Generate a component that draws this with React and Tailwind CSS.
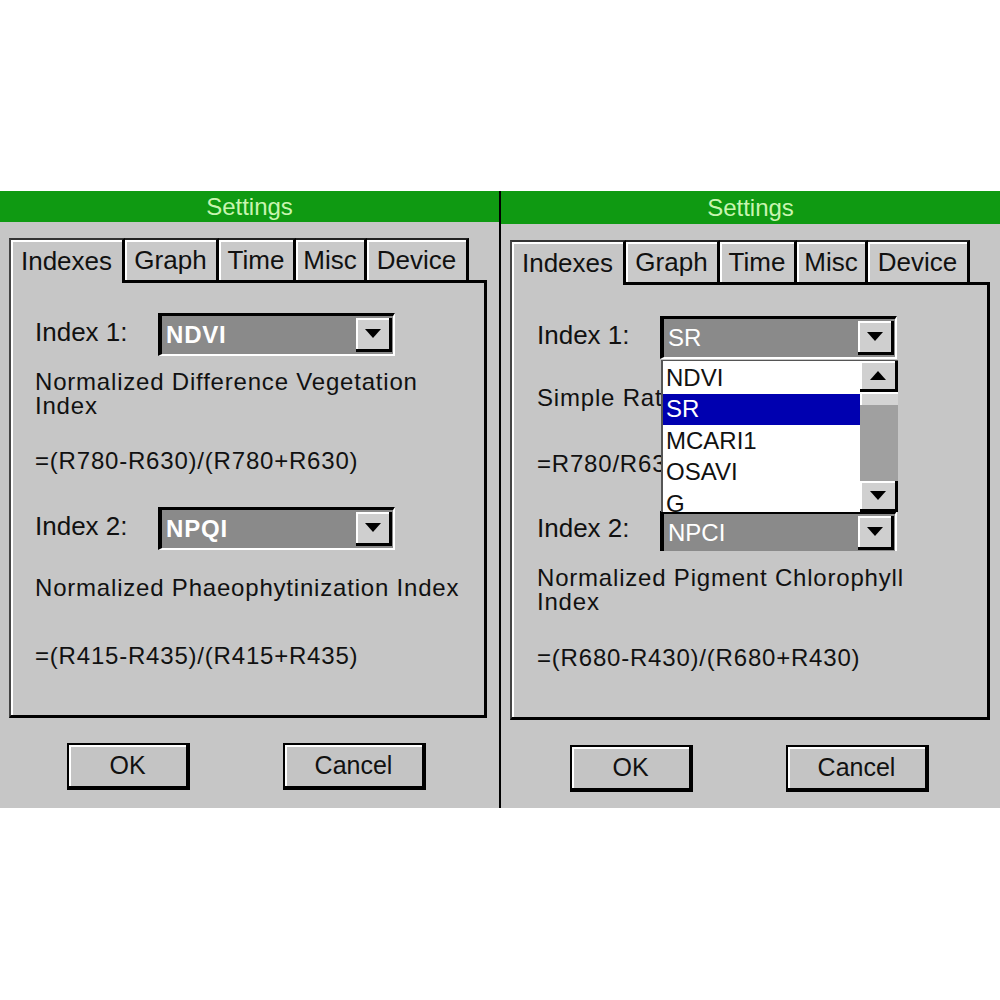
const FONT = { fontFamily: '"Liberation Sans", Arial, sans-serif' };

function Arrow({ up }) {
  return (
    <svg width="16" height="9" viewBox="0 0 16 9">
      {up ? <polygon points="0,9 16,9 8,0" fill="#000" /> : <polygon points="0,0 16,0 8,9" fill="#000" />}
    </svg>
  );
}

function Combo({ value, bold }) {
  return (
    <div className="flex h-[43px] w-[237px] border-t-[3px] border-l-[4px] border-t-black border-l-black border-b-2 border-r-2 border-b-white border-r-white bg-[#8a8a8a]">
      <div className={`flex flex-1 items-center pl-[4px] text-[24px] text-white ${bold ? "font-bold" : ""}`}>{value}</div>
      <div className="my-[2px] mr-[1px] flex w-[36px] items-center justify-center border-r-[3px] border-b-[3px] border-black bg-[#cfcfcf] shadow-[inset_2px_2px_0_#fff]">
        <Arrow />
      </div>
    </div>
  );
}

function DropList() {
  const items = ["NDVI", "SR", "MCARI1", "OSAVI", "G"];
  return (
    <div className="absolute left-[1px] top-[44px] z-10 flex h-[152px] w-[237px] border-t border-l-2 border-[#555] bg-white">
      {/* items */}
      <div className="flex-1 overflow-hidden pt-[1px]">
        {items.map((it) => (
          <div
            key={it}
            className={`flex h-[31.5px] items-center pl-[3px] text-[24px] ${it === "SR" ? "bg-[#0000b0] text-white" : "text-[#111]"}`}
          >
            {it}
          </div>
        ))}
      </div>
      {/* scrollbar */}
      <div className="flex w-[38px] flex-col bg-[#a0a0a0]">
        <div className="flex h-[31px] items-center justify-center border-r-[3px] border-b-[3px] border-black bg-[#d0d0d0] shadow-[inset_2px_2px_0_#fff]">
          <Arrow up />
        </div>
        <div className="h-[13px] bg-[#d4d4d4] shadow-[inset_2px_2px_0_#fff]" />
        <div className="flex-1" />
        <div className="flex h-[31px] items-center justify-center border-r-[3px] border-b-[3px] border-black bg-[#d0d0d0] shadow-[inset_2px_2px_0_#fff]">
          <Arrow />
        </div>
      </div>
    </div>
  );
}

function Tab({ label, w, selected }) {
  if (selected) {
    return (
      <div
        className="flex h-[45px] shrink-0 items-center justify-center border-t-2 border-l-2 border-r-[3px] border-t-[#333] border-l-[#444] border-r-black bg-[#c6c6c6] shadow-[inset_2px_2px_0_#fff]"
        style={{ width: w }}
      >
        {label}
      </div>
    );
  }
  return (
    <div
      className="flex h-[45px] shrink-0 items-center justify-center border-t-2 border-r-[3px] border-b-[3px] border-t-[#222] border-r-black border-b-black bg-[#c9c9c9] shadow-[inset_2px_2px_0_#fff]"
      style={{ width: w }}
    >
      {label}
    </div>
  );
}

function Button({ label, w }) {
  return (
    <div
      className="flex h-[47px] items-center justify-center border-t-2 border-l-2 border-r-[4px] border-b-[4px] border-black bg-[#c4c4c4] text-[25px] shadow-[inset_2px_2px_0_#fff]"
      style={{ width: w }}
    >
      {label}
    </div>
  );
}

function LeftContent() {
  return (
    <div className="flex flex-col pl-[24px] text-[24px] leading-[24px] tracking-[0.8px] text-[#111]">
      <div className="mt-[30px] flex items-center gap-[25px]">
        <span className="mb-[6px] w-[98px] text-[26px] tracking-normal">Index 1:</span>
        <Combo value="NDVI" bold />
      </div>
      <p className="mt-[14px]">Normalized Difference Vegetation<br />Index</p>
      <p className="mt-[31px]">=(R780-R630)/(R780+R630)</p>
      <div className="mt-[34px] flex items-center gap-[25px]">
        <span className="mb-[6px] w-[98px] text-[26px] tracking-normal">Index 2:</span>
        <Combo value="NPQI" bold />
      </div>
      <p className="mt-[26px]">Normalized Phaeophytinization Index</p>
      <p className="mt-[44px]">=(R415-R435)/(R415+R435)</p>
    </div>
  );
}

function RightContent() {
  return (
    <div className="flex flex-col pl-[25px] text-[24px] leading-[24px] tracking-[0.8px] text-[#111]">
      <div className="mt-[31px] flex items-center gap-[25px]">
        <span className="mb-[6px] w-[98px] text-[26px] tracking-normal">Index 1:</span>
        <div className="relative tracking-normal">
          <Combo value="SR" />
          <DropList />
        </div>
      </div>
      <p className="mt-[27px]">Simple Ratio</p>
      <p className="mt-[42px]">=R780/R630</p>
      <div className="mt-[35px] flex items-center gap-[25px]">
        <span className="mb-[6px] w-[98px] text-[26px] tracking-normal">Index 2:</span>
        <div className="h-[40px] overflow-hidden tracking-normal">
          <Combo value="NPCI" />
        </div>
      </div>
      <p className="mt-[15px]">Normalized Pigment Chlorophyll<br />Index</p>
      <p className="mt-[32px]">=(R680-R430)/(R680+R430)</p>
    </div>
  );
}

function Panel({ right }) {
  const tabs = [
    ["Indexes", 116],
    ["Graph", 94],
    ["Time", 77],
    ["Misc", 71],
    ["Device", 102],
  ];
  return (
    <section className="flex w-[499px] flex-col bg-[#c6c6c6]">
      {/* title bar */}
      <header className={`flex items-center justify-center bg-[#0f9a12] text-[24px] text-[#c8f5b0] ${right ? "h-[33px]" : "h-[31px]"}`}>
        Settings
      </header>

      <div className="px-[9px] pt-[16px]">
        {/* tabs */}
        <div className="flex text-[26px] text-[#111]">
          {tabs.map(([t, w], i) => (
            <Tab key={t} label={t} w={w} selected={i === 0} />
          ))}
          <div className={`border-b-[3px] border-black ${right ? "w-[20px]" : "w-[18px]"}`} />
        </div>

        {/* page */}
        <div className={`h-[435px] border-l-2 border-r-[3px] border-b-[3px] border-l-[#444] border-r-black border-b-black shadow-[inset_2px_0_0_#fff] ${right ? "w-[480px]" : "w-[478px]"}`}>
          {right ? <RightContent /> : <LeftContent />}
        </div>
      </div>

      {/* buttons */}
      <div className={`mt-[25px] flex gap-[93px] ${right ? "pl-[69px]" : "pl-[67px]"}`}>
        <Button label="OK" w={123} />
        <Button label="Cancel" w={143} />
      </div>
    </section>
  );
}

export default function App() {
  return (
    <div className="h-[1000px] w-[1000px] bg-white pt-[191px] text-[#111]" style={FONT}>
      <div className="flex h-[617px]">
        <Panel />
        <div className="w-[2px] bg-black" />
        <Panel right />
      </div>
    </div>
  );
}
